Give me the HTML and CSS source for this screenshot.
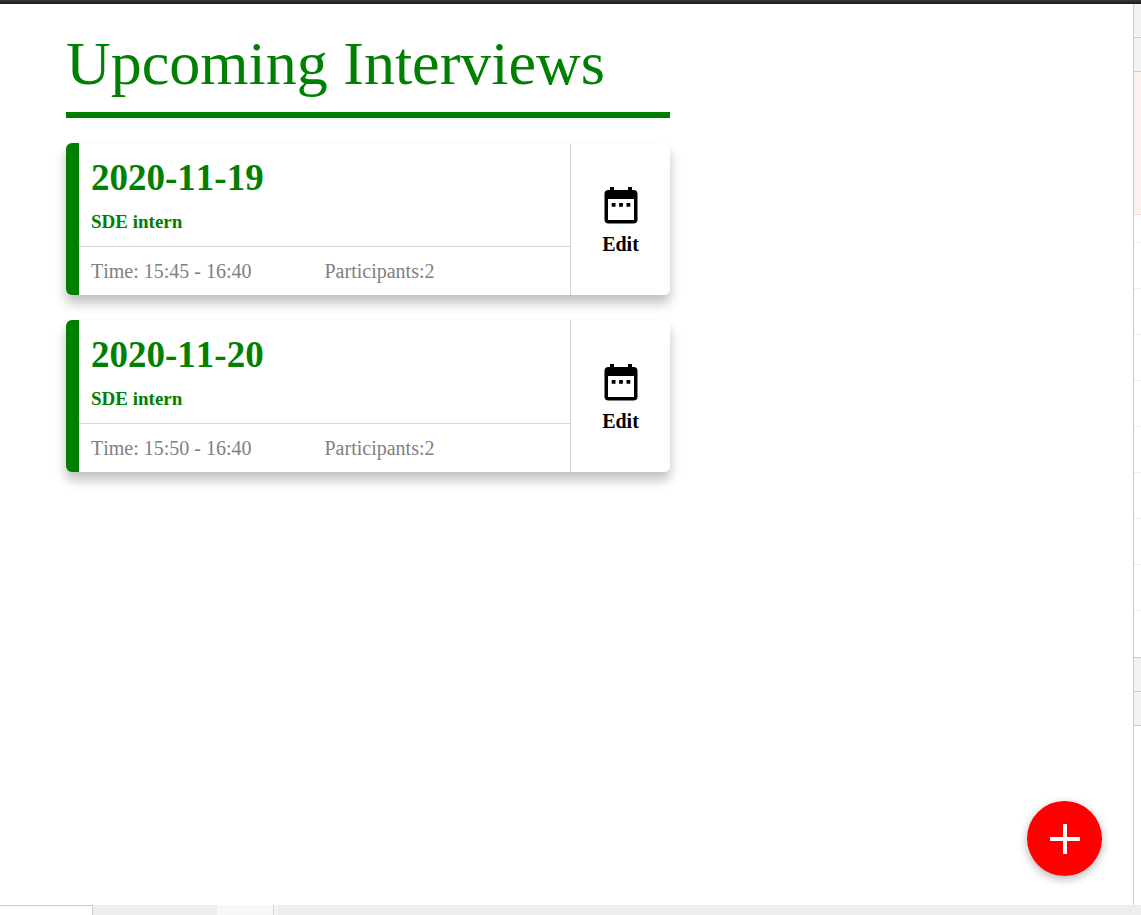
FILE: index.html
```
<!DOCTYPE html>
<html lang="en">
<head>
<meta charset="utf-8">
<meta name="viewport" content="width=device-width, initial-scale=1">
<title>Upcoming Interviews</title>
<link rel="stylesheet" href="styles.css">
</head>
<body>
<div class="topbar"></div>
<div class="workspace">
  <main class="content">
    <section class="interviews">
      <h1 class="title">Upcoming Interviews</h1>
      <article class="card">
        <div class="details">
          <header class="summary">
            <h2 class="date">2020-11-19</h2>
            <p class="role">SDE intern</p>
          </header>
          <div class="meta"><span class="time">Time: 15:45 - 16:40</span><span>Participants:2</span></div>
        </div>
        <button class="edit" type="button">
          <svg class="calendar" viewBox="0 0 34 38" aria-hidden="true"><path fill-rule="evenodd" d="M6 1h4v3h14V1h4v3h1.500a4 4 0 0 1 4 4v25.500a4 4 0 0 1-4 4h-25a4 4 0 0 1-4-4V8a4 4 0 0 1 4-4H6zM4 13v21h26V13z"/><path d="M7.700 17h3.800v3.800H7.700zM15.100 17h3.800v3.800h-3.800zM22.500 17h3.800v3.800h-3.800z"/></svg>
          <span>Edit</span>
        </button>
      </article>
      <article class="card">
        <div class="details">
          <header class="summary">
            <h2 class="date">2020-11-20</h2>
            <p class="role">SDE intern</p>
          </header>
          <div class="meta"><span class="time">Time: 15:50 - 16:40</span><span>Participants:2</span></div>
        </div>
        <button class="edit" type="button">
          <svg class="calendar" viewBox="0 0 34 38" aria-hidden="true"><path fill-rule="evenodd" d="M6 1h4v3h14V1h4v3h1.500a4 4 0 0 1 4 4v25.500a4 4 0 0 1-4 4h-25a4 4 0 0 1-4-4V8a4 4 0 0 1 4-4H6zM4 13v21h26V13z"/><path d="M7.700 17h3.800v3.800H7.700zM15.100 17h3.800v3.800h-3.800zM22.500 17h3.800v3.800h-3.800z"/></svg>
          <span>Edit</span>
        </button>
      </article>
    </section>
    <button class="add" type="button" aria-label="Add interview">
      <svg class="plus" viewBox="0 0 30 30" aria-hidden="true"><path d="M13 0h4v13h13v4H17v13h-4V17H0v-4h13z"/></svg>
    </button>
  </main>
  <aside class="panel">
    <div class="row bar"></div>
    <div class="row bar"></div>
    <div class="row error"></div>
    <div class="row short"></div>
    <div class="row"></div>
    <div class="row"></div>
    <div class="row"></div>
    <div class="row"></div>
    <div class="row"></div>
    <div class="row"></div>
    <div class="row"></div>
    <div class="row"></div>
    <div class="row last"></div>
    <div class="row bar"></div>
    <div class="row bar"></div>
  </aside>
</div>
<footer class="tabs">
  <div class="tab active"></div>
  <div class="tab idle"></div>
  <div class="tab light"></div>
  <div class="tab edge"></div>
</footer>
</body>
</html>
```
FILE: styles.css
```
* { box-sizing: border-box; }

body {
  margin: 0;
  min-height: 100vh;
  display: flex;
  flex-direction: column;
  background: #fff;
  font-family: "Liberation Serif", "Times New Roman", serif;
  font-kerning: none;
}

h1, h2, p { margin: 0; }

button {
  border: 0;
  padding: 0;
  font-family: inherit;
  cursor: pointer;
}

.topbar {
  height: 4px;
  background: #333;
  border-bottom: 2px solid #222;
}

.workspace {
  flex: 1;
  display: flex;
}

.content {
  position: relative;
  flex: 1;
  min-width: 0;
  padding: 24px 66px;
}

.interviews {
  max-width: 604px;
  display: flex;
  flex-direction: column;
  gap: 25px;
}

.title {
  padding-bottom: 14px;
  border-bottom: 6px solid green;
  color: green;
  font-size: 62px;
  font-weight: 400;
  line-height: 70px;
}

.card {
  display: flex;
  background: #fff;
  border-left: 13px solid green;
  border-radius: 6px;
  box-shadow: 0 8px 12px rgba(0, 0, 0, 0.25);
}

.details { flex: 1; }

.summary {
  padding: 12px;
  border-bottom: 1px solid #d5d5da;
  color: green;
}

.date {
  font-size: 37px;
  line-height: 46px;
}

.role {
  padding-top: 8px;
  font-size: 19px;
  font-weight: 700;
  line-height: 25px;
}

.meta {
  display: grid;
  grid-template-columns: 1fr 1fr;
  color: gray;
  font-size: 20px;
  line-height: 48px;
}

.time { padding-left: 12px; }

.edit {
  width: 100px;
  padding-top: 4px;
  display: flex;
  flex-direction: column;
  align-items: center;
  justify-content: center;
  gap: 8px;
  background: #fff;
  border-left: 1px solid #d5d5da;
  border-radius: 0 6px 6px 0;
  color: #000;
  font-size: 20px;
  font-weight: 700;
  line-height: 24px;
}

.calendar {
  width: 34px;
  height: 38px;
}

.add {
  position: absolute;
  right: 31px;
  bottom: 29px;
  width: 75px;
  height: 75px;
  display: flex;
  align-items: center;
  justify-content: center;
  background: red;
  border-radius: 50%;
  box-shadow: 0 3px 10px rgba(0, 0, 0, 0.3);
}

.plus {
  width: 30px;
  height: 30px;
  fill: #fff;
}

.panel {
  width: 8px;
  border-left: 1px solid #ccc;
}

.row {
  height: 46px;
  border-bottom: 1px solid #eee;
}

.row.short { height: 28px; }

.row.bar {
  height: 34px;
  background: #f2f2f2;
  border-color: #ccc;
}

.row.error {
  height: 143px;
  background: #fff0f0;
  border-color: #ffd6d6;
}

.row.last {
  height: 47px;
  border-color: #ccc;
}

.tabs {
  height: 10px;
  display: flex;
  background: #ededed;
}

.tab.active {
  width: 93px;
  background: #fff;
  border: solid #ccc;
  border-width: 1px 1px 0 0;
}

.tab.idle { width: 124px; }

.tab.light {
  width: 57px;
  background: #f8f8f8;
  border-right: 1px solid #d4d4d4;
}

.tab.edge {
  width: 4px;
  background: #f3f3f3;
}
```
